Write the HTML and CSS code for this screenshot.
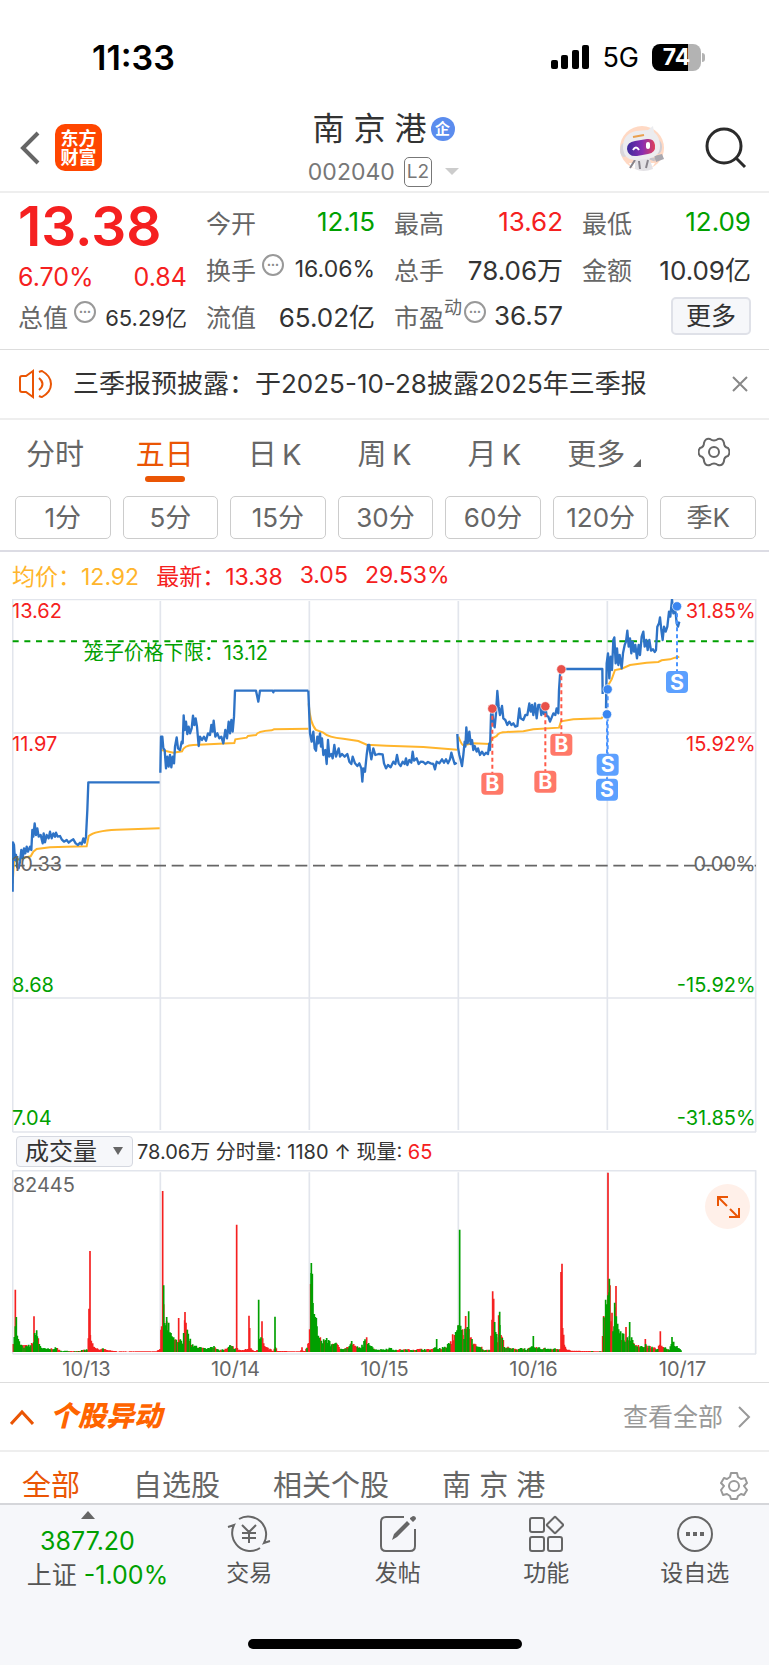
FILE: index.html
```html
<!DOCTYPE html>
<html lang="zh-CN">
<head>
  <meta charset="UTF-8">
  <meta name="viewport" content="width=device-width, initial-scale=1.0">
  <title>南京港 002040</title>
  <link rel="stylesheet" href="styles.css">
</head>
<body>
  <div class="status-bar">
    <span class="time">11:33</span>
    <div class="status-right">
      <svg width="38" height="25" viewBox="0 0 38 25">
        <rect x="0" y="15" width="7" height="9" rx="2"/>
        <rect x="10" y="10" width="7" height="14" rx="2"/>
        <rect x="21" y="5" width="7" height="19" rx="2"/>
        <rect x="31" y="0" width="7" height="24" rx="2"/>
      </svg>
      <span class="network">5G</span>
      <span class="battery">74</span>
    </div>
  </div>

  <header class="header">
    <div class="header-left">
      <button class="icon-btn" aria-label="返回">
        <svg width="20" height="34" viewBox="0 0 20 34"><path d="M18 2L3 17l15 15" fill="none" stroke="#666" stroke-width="4"/></svg>
      </button>
      <a class="logo" href="#"><span>东方</span><span>财富</span></a>
    </div>
    <div class="header-title">
      <h1>南 京 港<span class="badge">企</span></h1>
      <div class="code">002040 <span class="level">L2</span><i class="arrow-down"></i></div>
    </div>
    <div class="header-right">
      <button class="icon-btn" aria-label="助手">
        <svg width="46" height="46" viewBox="0 0 46 46">
          <defs>
            <linearGradient id="visor" x1="0" y1="0" x2="1" y2="0">
              <stop offset="0" stop-color="#3b2a9c"/>
              <stop offset=".55" stop-color="#8a2db0"/>
              <stop offset="1" stop-color="#e0405a"/>
            </linearGradient>
          </defs>
          <circle cx="23" cy="23" r="22" fill="#ffd9c4"/>
          <path d="M10 38q3 7 13 7t13-7z" fill="#fff"/>
          <path d="M16 33l14-1 4 12q-10 4-18 0z" fill="#e4e2e6"/>
          <path d="M16 35l-5 8M20 36l1 8M29 35l-2 8" stroke="#88848c" stroke-width="2"/>
          <path d="M31 33l5 2" stroke="#c5c2c8" stroke-width="3"/>
          <path d="M35 31l8-2 2 5-8 3z" fill="#a9a7ae"/>
          <ellipse cx="5" cy="25" rx="4" ry="7" fill="#d9d6da"/>
          <ellipse cx="39" cy="22" rx="4" ry="7" fill="#d0cdd3"/>
          <path d="M4 24Q3 9 17 6l12-1 5-4 1 6q6 5 6 14 0 11-13 13l-11 1Q6 36 4 24z" fill="#ececef"/>
          <path d="M14 12l11-2" stroke="#e9a04e" stroke-width="2"/>
          <path d="M8 24q0-7 8-8l12-2q7-1 8 6 1 8-7 9l-11 2Q9 32 8 24z" fill="url(#visor)"/>
          <path d="M14 25q3-5 6 0" fill="none" stroke="#fff" stroke-width="2"/>
          <rect x="27" y="17" width="4" height="7" rx="2" fill="#fff"/>
        </svg>
      </button>
      <button class="icon-btn" aria-label="搜索">
        <svg width="42" height="42" viewBox="0 0 42 42"><g fill="none" stroke="#2b2b2b" stroke-width="3"><circle cx="19" cy="19" r="17"/><path d="M31 31l9 9"/></g></svg>
      </button>
    </div>
  </header>

  <section class="quote">
    <div class="price-box">
      <div class="price">13.38</div>
      <div class="change"><span>6.70%</span><span>0.84</span></div>
    </div>
    <div class="item"><label>今开</label><b class="green">12.15</b></div>
    <div class="item"><label>最高</label><b class="red">13.62</b></div>
    <div class="item"><label>最低</label><b class="green">12.09</b></div>
    <div class="item"><label>换手<i class="dots">•••</i></label><b class="small">16.06%</b></div>
    <div class="item"><label>总手</label><b>78.06万</b></div>
    <div class="item"><label>金额</label><b>10.09亿</b></div>
    <div class="item"><label>总值<i class="dots">•••</i></label><b class="tiny">65.29亿</b></div>
    <div class="item"><label>流值</label><b>65.02亿</b></div>
    <div class="item"><label>市盈<sup>动</sup><i class="dots tight">•••</i></label><b>36.57</b></div>
    <div class="item end"><button class="more-btn">更多</button></div>
  </section>

  <section class="notice">
    <svg width="34" height="30" viewBox="0 0 34 30" fill="none" stroke="#ea5504" stroke-width="2">
      <path d="M14 2L7 7H3q-2 0-2 2v12q0 2 2 2h4l7 5zM20 9q7 6 0 12M20 3q2-1 3-1 9 5 9 13t-9 13q-1 0-3-1"/>
    </svg>
    <a href="#">三季报预披露：于2025-10-28披露2025年三季报</a>
    <button class="icon-btn" aria-label="关闭">
      <svg width="16" height="16" viewBox="0 0 16 16"><path d="M1 1l14 14M15 1L1 15" stroke="#888" stroke-width="2"/></svg>
    </button>
  </section>

  <nav class="tabs">
    <button>分时</button>
    <button class="active">五日</button>
    <button>日&thinsp;K</button>
    <button>周&thinsp;K</button>
    <button>月&thinsp;K</button>
    <button>更多<i class="corner"></i></button>
    <button aria-label="设置">
      <svg width="32" height="30" viewBox="0 0 32 30" fill="none" stroke="#666" stroke-width="2">
        <path d="M12 2q4 3 8 0 5-1 6 4 0 4 4 5 3 4 0 8-4 1-4 5-1 5-6 4-4-3-8 0-5 1-6-4 0-4-4-5-3-4 0-8 4-1 4-5 1-5 6-4z"/>
        <circle cx="16" cy="15" r="5"/>
      </svg>
    </button>
  </nav>

  <div class="periods">
    <button>1分</button>
    <button>5分</button>
    <button>15分</button>
    <button>30分</button>
    <button>60分</button>
    <button>120分</button>
    <button>季K</button>
  </div>

  <main class="charts">
    <div class="legend">
      <span class="yellow">均价：12.92</span>
      <span class="red">最新：13.38</span>
      <span class="red">3.05</span>
      <span class="red">29.53%</span>
    </div>

    <svg class="price-chart" viewBox="36 27 2235 1602">
      <g class="grid">
        <path d="M38 27V1626M481 33V1620M928 33V1620M1375 33V1620M1822 33V1620M2267 27V1626"/>
        <path d="M38 28H2268M38 429H2268M38 1224H2268M38 1626H2268"/>
      </g>
      <path class="limit-line" d="M38 154H2268"/>
      <path class="zero-line" d="M38 827H2268"/>
      <g class="avg">
        <path d="M38 880L42 815 60 806 92 799 100 785 110 777 150 772 200 770 260 769 266 738Q285 722 350 719L479 715"/>
        <path d="M484 480L520 488 546 484Q552 466 580 465L703 459 706 448 740 443 744 438 768 435Q772 424 815 421L822 418 925 416"/>
        <path d="M926 340Q930 400 948 420L970 428Q985 442 1030 446L1075 453 1100 464 1160 467 1270 471 1372 479"/>
        <path d="M1375 440Q1385 465 1390 466L1420 460 1470 462 1477 445 1490 438Q1495 426 1520 426L1570 424 1600 418 1677 413 1683 394 1720 388 1805 385 1808 380"/>
        <path d="M1822 290L1835 268 1845 240 1865 236 1890 225 1940 218 1975 216 1985 211 2010 208 2025 203 2038 200"/>
      </g>
      <g class="line" id="priceLines"></g>
      <g class="axis">
        <text class="red" x="36" y="84">13.62</text>
        <text class="red" x="36" y="484">11.97</text>
        <text class="gray" x="36" y="842">10.33</text>
        <text class="green" x="36" y="1207">8.68</text>
        <text class="green" x="36" y="1606">7.04</text>
        <text class="red right" x="2267" y="84">31.85%</text>
        <text class="red right" x="2267" y="484">15.92%</text>
        <text class="gray right" x="2267" y="842">0.00%</text>
        <text class="green right" x="2267" y="1207">-15.92%</text>
        <text class="green right" x="2267" y="1606">-31.85%</text>
        <text class="green" x="251" y="209">笼子价格下限：13.12</text>
      </g>
      <g id="trades"></g>
    </svg>

    <div class="volume-bar">
      <button class="volume-select">成交量<i></i></button>
      <p>78.06万 分时量: 1180 ↑ 现量: <span class="red">65</span></p>
    </div>

    <div class="volume-wrap">
      <svg class="volume-chart" viewBox="36 150 2235 555">
        <g class="grid">
          <path d="M38 151V702M481 157V696M928 157V696M1375 157V696M1822 157V696M2267 151V702"/>
          <path d="M38 152H2268M38 702H2268"/>
        </g>
        <path class="vol-up" id="volUp"/>
        <path class="vol-down" id="volDown"/>
        <text class="gray" x="38" y="215">82445</text>
      </svg>
      <button class="expand" aria-label="全屏">
        <svg width="24" height="24" viewBox="0 0 24 24"><path d="M2 11V2h10M2 2l9 9M23 13v9H13M22 22l-8-8" fill="none" stroke="#ea5504" stroke-width="2"/></svg>
      </button>
    </div>

    <div class="dates">
      <span>10/13</span><span>10/14</span><span>10/15</span><span>10/16</span><span>10/17</span>
    </div>
  </main>

  <section class="movement">
    <svg width="24" height="16" viewBox="0 0 24 16"><path d="M1 15L12 3l11 12" fill="none" stroke="#ea5504" stroke-width="3"/></svg>
    <h2>个股异动</h2>
    <a href="#"><span>查看全部</span>
      <svg width="14" height="22" viewBox="0 0 14 22"><path d="M2 1l10 10L2 21" fill="none" stroke="#999" stroke-width="2"/></svg>
    </a>
  </section>

  <nav class="filters">
    <button class="active">全部</button>
    <button>自选股</button>
    <button>相关个股</button>
    <button>南 京 港</button>
    <button class="setting" aria-label="设置">
      <svg width="28" height="28" viewBox="0 0 28 28" fill="none" stroke="#999" stroke-width="2">
        <path d="M11 1h6l1 4 3 2 4-1 2 5-3 3 3 4-3 5-3-1-3 2-1 3h-6l-1-3-3-2-4 1-2-5 3-4-3-3 3-5 3 1 3-2z" stroke-linejoin="round"/>
        <circle cx="14" cy="14" r="5"/>
      </svg>
    </button>
  </nav>

  <footer class="bottom">
    <div class="bottom-nav">
      <a class="index" href="#">
        <i></i>
        <span class="green">3877.20</span>
        <span class="index-name">上证 <em class="green">-1.00%</em></span>
      </a>
      <a href="#">
        <svg width="44" height="38" viewBox="0 0 44 38">
          <path d="M12 4A18 18 0 0 1 37 28l6-2M33 33A18 18 0 0 1 7 10l-6 2M15 10l7 7 7-7M22 17v11M15 18h14M15 23h14"/>
        </svg>
        交易
      </a>
      <a href="#">
        <svg width="38" height="38" viewBox="0 0 38 38">
          <path d="M25 2H7Q2 2 2 7v24q0 5 5 5h24q5 0 5-5V14"/>
          <path d="M13 25l2-6L28 6l3 3-13 13zM31 3l3-2q3 0 3 3l-3 3-3-3z" fill="#666" stroke="none"/>
        </svg>
        发帖
      </a>
      <a href="#">
        <svg width="36" height="38" viewBox="0 0 36 38">
          <rect x="2" y="3" width="14" height="14" rx="2"/><rect x="2" y="22" width="14" height="14" rx="2"/><rect x="20" y="22" width="14" height="14" rx="2"/><rect x="21" y="4" width="12" height="12" rx="1" transform="rotate(45 27 10)"/>
        </svg>
        功能
      </a>
      <a href="#">
        <svg width="38" height="38" viewBox="0 0 38 38">
          <circle cx="19" cy="19" r="17"/>
          <path d="M10 19h4M17 19h4M24 19h4" stroke-width="4"/>
        </svg>
        设自选
      </a>
    </div>
    <div class="home-bar"></div>
  </footer>

  <script src="chart.js"></script>
</body>
</html>
```
FILE: styles.css
```css
* {
  box-sizing: border-box;
}
body {
  margin: 0;
  font-family: Inter, "Noto Sans CJK SC", sans-serif;
  font-size: 25px;
  color: #333;
  background: #fff;
}
button {
  padding: 0;
  border: none;
  background: none;
  font: inherit;
  color: inherit;
  cursor: pointer;
}
a {
  color: inherit;
  text-decoration: none;
}
svg {
  display: block;
}
i, em {
  font-style: normal;
}
.red { color: #f52020; fill: #f52020; }
.green { color: #00a000; fill: #00a000; }
.gray { color: #666; fill: #666; }
.yellow { color: #ffb52c; }

.status-bar {
  display: flex;
  justify-content: space-between;
  align-items: center;
  height: 106px;
  padding: 9px 68px 0 92px;
  color: #000;
}
.time {
  font-size: 34px;
  font-weight: 600;
}
.status-right {
  display: flex;
  align-items: center;
  gap: 13px;
}
.network {
  font-size: 27px;
}
.battery {
  position: relative;
  width: 49px;
  height: 27px;
  border-radius: 8px;
  background: linear-gradient(90deg, #000 74%, #b3b3b3 74%);
  color: #fff;
  font-size: 23px;
  font-weight: 700;
  line-height: 27px;
  text-align: center;
}
.battery::after {
  content: "";
  position: absolute;
  right: -4px;
  top: 9px;
  width: 3px;
  height: 9px;
  border-radius: 0 3px 3px 0;
  background: #b3b3b3;
}

.header {
  display: grid;
  grid-template-columns: 1fr auto 1fr;
  align-items: center;
  height: 87px;
  padding: 0 22px 2px 20px;
  border-bottom: 2px solid #eee;
}
.header-left, .header-right {
  display: flex;
  align-items: center;
  gap: 15px;
}
.header-right {
  justify-content: flex-end;
  gap: 40px;
}
.logo {
  display: flex;
  flex-direction: column;
  justify-content: center;
  align-items: center;
  width: 47px;
  height: 47px;
  border-radius: 10px;
  background: #ff4600;
  color: #fff;
  font-size: 18px;
  font-weight: 700;
  line-height: 19px;
}
.header-title {
  display: flex;
  flex-direction: column;
  align-items: center;
  gap: 8px;
}
.header h1 {
  display: flex;
  align-items: center;
  gap: 4px;
  margin: 0;
  font-size: 32px;
  font-weight: 400;
  line-height: 40px;
}
.badge {
  width: 24px;
  height: 24px;
  border-radius: 50%;
  background: #5b8cee;
  color: #fff;
  font-size: 15px;
  font-weight: 700;
  line-height: 23px;
  text-align: center;
}
.code {
  display: flex;
  align-items: center;
  gap: 9px;
  color: #777;
  font-size: 23px;
  line-height: 30px;
}
.level {
  padding: 0 2px;
  border: 1px solid #777;
  border-radius: 5px;
  font-size: 19px;
  line-height: 28px;
}
.arrow-down {
  margin-left: 4px;
  border: 7px solid transparent;
  border-top-color: #ccc;
  border-bottom: 0;
}

.quote {
  display: grid;
  grid-template-columns: repeat(4, 1fr);
  grid-auto-rows: 47px;
  column-gap: 19px;
  padding: 5px 18px 10px;
  border-bottom: 1px solid #ddd;
}
.price-box {
  grid-row: span 2;
}
.price {
  color: #f52020;
  font-size: 55px;
  font-weight: 600;
  line-height: 56px;
}
.change {
  display: flex;
  justify-content: space-between;
  color: #f52020;
  line-height: 46px;
}
.item {
  display: flex;
  justify-content: space-between;
  align-items: center;
  white-space: nowrap;
}
.item label {
  display: flex;
  align-items: center;
  color: #666;
}
.item b {
  font-size: 26px;
  font-weight: 400;
}
.item .small {
  font-size: 23px;
}
.item .tiny {
  font-size: 22px;
}
.item sup {
  align-self: flex-start;
  font-size: 18px;
  line-height: 20px;
}
.dots {
  width: 22px;
  height: 22px;
  margin: 0 0 7px 6px;
  border: 2px solid #999;
  border-radius: 50%;
  color: #888;
  font-size: 7px;
  line-height: 18px;
  text-align: center;
}
.dots.tight {
  margin-left: 2px;
}
.item.end {
  justify-content: flex-end;
}
.more-btn {
  width: 80px;
  height: 38px;
  border: 2px solid #dfe1e8;
  border-radius: 5px;
  background: #f6f7fa;
  line-height: 30px;
}

.notice {
  display: flex;
  align-items: center;
  height: 70px;
  padding: 0 21px 0 19px;
  border-bottom: 2px solid #eee;
  font-size: 26px;
}
.notice a {
  flex: 1;
  margin-left: 20px;
  padding-bottom: 5px;
  white-space: nowrap;
}

.tabs {
  display: grid;
  grid-template-columns: repeat(7, 1fr);
  height: 76px;
  color: #666;
  font-size: 29px;
}
.tabs button {
  position: relative;
  display: flex;
  justify-content: center;
  align-items: center;
  height: 66px;
  padding-bottom: 3px;
}
.tabs .active {
  color: #ea5504;
}
.tabs .active::after {
  content: "";
  position: absolute;
  bottom: 4px;
  left: 50%;
  width: 40px;
  height: 6px;
  margin-left: -20px;
  border-radius: 3px;
  background: #ea5504;
}
.corner {
  align-self: flex-end;
  margin: 0 0 16px 8px;
  border-left: 8px solid transparent;
  border-bottom: 8px solid #666;
}
.periods {
  display: grid;
  grid-template-columns: repeat(7, 1fr);
  gap: 12px;
  padding: 0 13px 11px 15px;
  border-bottom: 2px solid #dcdce4;
  color: #666;
  font-size: 26px;
}
.periods button {
  height: 43px;
  border: 1px solid #ccc;
  border-radius: 5px;
  line-height: 41px;
}

.charts {
  padding: 0 12px;
}
.legend {
  display: flex;
  align-items: center;
  gap: 17px;
  height: 47px;
  padding-bottom: 2px;
  font-size: 23px;
}
.price-chart, .volume-chart {
  width: 100%;
  height: auto;
}
.price-chart text, .volume-chart text {
  font-size: 60px;
}
.right {
  text-anchor: end;
}
.grid path {
  fill: none;
  stroke: #e2e5ec;
  stroke-width: 5;
}
.limit-line {
  stroke: #00a000;
  stroke-width: 6;
  stroke-dasharray: 18 17;
}
.zero-line {
  stroke: #666;
  stroke-width: 5;
  stroke-dasharray: 36 17;
}
.avg path {
  fill: none;
  stroke: #ffb52c;
  stroke-width: 6;
}
.line path {
  fill: none;
  stroke: #2e73c6;
  stroke-width: 7;
  stroke-linejoin: round;
}
.buy { fill: #ff7868; }
.sell { fill: #5ca0ff; }
.buy-dot { fill: #e8504a; stroke: #fff; stroke-width: 2; }
.sell-dot { fill: #3a86f0; stroke: #fff; stroke-width: 2; }
.buy-link, .sell-link {
  stroke: #ff5a48;
  stroke-width: 6;
  stroke-dasharray: 12 9;
}
.sell-link {
  stroke: #4a94ff;
}
.price-chart .mark {
  fill: #fff;
  font-size: 64px;
  font-weight: 700;
  text-anchor: middle;
}
.volume-bar {
  display: flex;
  align-items: center;
  height: 37px;
  padding: 0 0 1px 4px;
  font-size: 20px;
}
.volume-bar p {
  margin: 0 0 1px 4px;
  white-space: nowrap;
}
.volume-select {
  display: flex;
  align-items: center;
  justify-content: space-between;
  width: 117px;
  height: 31px;
  padding: 0 9px 0 8px;
  border: 1px solid #d5d8e0;
  border-radius: 4px;
  background: #f6f7fa;
  font-size: 24px;
  line-height: 27px;
}
.volume-select i {
  border: 5px solid transparent;
  border-top: 8px solid #666;
  border-bottom: 0;
}
.volume-wrap {
  position: relative;
}
.vol-up, .vol-down {
  fill: none;
  stroke: #f52020;
  stroke-width: 5;
}
.vol-down {
  stroke: #00a000;
}
.expand {
  position: absolute;
  top: 14px;
  right: 7px;
  display: flex;
  justify-content: center;
  align-items: center;
  width: 45px;
  height: 45px;
  border-radius: 50%;
  background: #fff0e9;
}
.dates {
  display: grid;
  grid-template-columns: repeat(5, 1fr);
  height: 27px;
  color: #666;
  font-size: 20px;
  line-height: 29px;
  text-align: center;
}

.movement {
  display: flex;
  align-items: center;
  height: 70px;
  padding: 0 18px 0 10px;
  border-top: 1px solid #ddd;
  border-bottom: 2px solid #eee;
}
.movement h2 {
  margin: 0 0 0 16px;
  padding-bottom: 5px;
  color: #ff6400;
  font-size: 28px;
  font-style: italic;
  font-weight: 900;
}
.movement a {
  display: flex;
  align-items: center;
  gap: 14px;
  margin-left: auto;
  color: #999;
}
.movement a span {
  padding-bottom: 4px;
}
.filters {
  display: flex;
  align-items: center;
  gap: 53px;
  height: 51px;
  padding: 17px 21px 0 22px;
  color: #666;
  font-size: 29px;
  line-height: 34px;
  white-space: nowrap;
}
.filters .active {
  color: #ea5504;
}
.filters .setting {
  margin-left: auto;
}

.bottom {
  height: 162px;
  border-top: 2px solid #d5d6da;
  background: #f6f7fa;
}
.bottom-nav {
  display: flex;
  height: 134px;
  color: #555;
}
.bottom-nav a {
  flex: 1;
  display: flex;
  flex-direction: column;
  align-items: center;
  gap: 5px;
  padding-top: 10px;
  font-size: 23px;
  line-height: 30px;
}
.bottom-nav svg {
  fill: none;
  stroke: #666;
  stroke-width: 2;
}
.bottom-nav .index {
  flex: 0 0 175px;
  gap: 0;
  padding-top: 6px;
  font-size: 25px;
  line-height: 34px;
}
.index i {
  margin-bottom: 5px;
  border: 7px solid transparent;
  border-top: 0;
  border-bottom: 8px solid #666;
}
.index-name {
  padding-left: 20px;
  white-space: nowrap;
}
.home-bar {
  width: 274px;
  height: 10px;
  margin: 0 auto;
  border-radius: 5px;
  background: #000;
}
```
FILE: chart.js
```js
// price lines, one per trading session
const prices = [
  '38,905 39,757 42,765 45,810 48,795 52,832 56,835 60,815 64,780 68,805 72,775 76,790 80,770 84,785 90,770 94,780 97,720 100,740 104,700 108,735 112,715 116,740 122,735 128,760 131,730 135,757 140,735 146,745 150,725 155,745 160,730 165,740 168,728 173,740 180,738 185,748 192,755 200,750 206,758 213,752 220,748 227,760 234,765 240,758 245,763 250,745 254,758 258,740 262,660 265,577 479,577',
  '481,548 483,440 487,440 490,475 494,480 498,535 502,500 506,530 510,495 514,532 518,500 522,520 525,470 530,442 534,475 540,480 545,455 548,460 551,376 554,420 558,395 562,432 566,410 570,430 575,415 579,377 583,405 587,385 591,410 596,468 600,440 606,450 612,440 618,452 624,430 630,435 634,405 638,425 641,392 646,440 652,430 658,445 664,440 670,460 676,420 681,445 686,395 690,430 694,390 698,425 702,380 705,302 768,302 775,335 780,302 818,302 820,307 822,302 925,302',
  '925,302 930,430 935,455 940,425 944,475 948,482 952,440 955,460 960,430 963,470 966,445 970,495 976,480 980,522 984,450 988,500 994,492 998,505 1003,465 1008,500 1016,475 1020,500 1026,492 1034,500 1042,492 1048,515 1054,522 1058,500 1065,520 1072,528 1078,520 1084,535 1087,575 1090,535 1095,545 1100,495 1104,465 1108,465 1110,485 1114,508 1120,475 1126,495 1136,492 1148,493 1152,520 1158,535 1164,525 1172,532 1180,515 1186,522 1191,495 1196,520 1202,528 1208,515 1214,522 1218,505 1222,525 1228,510 1234,518 1238,485 1242,512 1250,505 1256,522 1262,515 1270,516 1276,522 1284,516 1292,520 1300,522 1305,538 1310,515 1318,520 1326,508 1332,518 1338,508 1344,520 1350,508 1354,488 1358,502 1364,522 1370,518',
  '1372,432 1374,472 1378,495 1382,510 1386,528 1390,495 1394,455 1396,470 1399,412 1403,460 1408,425 1412,462 1416,450 1420,480 1424,468 1430,485 1434,475 1440,495 1446,485 1452,495 1458,488 1464,492 1468,460 1470,480 1473,375 1476,350 1480,400 1484,412 1488,370 1492,303 1496,350 1500,375 1506,348 1510,385 1516,390 1522,405 1528,395 1534,405 1540,400 1546,410 1552,408 1558,355 1562,385 1570,390 1576,375 1582,375 1588,340 1592,365 1596,345 1600,375 1605,340 1610,385 1615,345 1620,345 1624,375 1628,350 1632,372 1636,350 1640,378 1645,380 1650,395 1654,385 1660,370 1666,375 1670,355 1675,370 1677,300 1680,255 1684,237 1807,237 1808,312',
  '1818,355 1820,220 1824,190 1828,265 1832,200 1836,240 1840,150 1843,142 1847,220 1851,175 1855,225 1859,195 1865,235 1869,190 1874,165 1878,155 1882,122 1886,170 1890,145 1894,190 1898,155 1902,185 1906,165 1911,205 1916,165 1920,195 1925,140 1930,125 1934,170 1939,150 1943,180 1948,150 1953,182 1959,178 1964,186 1968,180 1972,110 1977,100 1980,82 1984,120 1988,150 1992,110 1997,125 2002,110 2007,65 2011,80 2016,28 2020,70 2026,60 2030,100 2034,110 2038,95'
];

// type, x, dot y, label x, label y
const trades = [
  ['B', 1477, 356, 1477, 581],
  ['B', 1636, 349, 1636, 575],
  ['B', 1684, 238, 1684, 464],
  ['S', 1823, 298, 1823, 524],
  ['S', 1821, 373, 1821, 599],
  ['S', 2031, 49, 2031, 276]
];

// volume outline: x, height, share of falling bars
const volume = [
  [40, 40, .6], [46, 80, .6], [52, 50, .8], [58, 32, .8], [66, 20, .6], [80, 20, .5], [98, 26, .5], [104, 65, .6],
  [112, 60, .6], [118, 28, .6], [126, 12, .7], [145, 10, .5], [172, 14, .5], [180, 4, .6], [230, 3, .5], [262, 8, 0],
  [268, 70, 0], [275, 30, 0], [283, 14, 0], [300, 8, .2], [315, 13, 0], [322, 5, 0], [345, 4, 0], [350, 2, 0],
  [470, 2, .1], [480, 10, 0], [485, 100, 0], [491, 190, .7], [497, 100, .7], [503, 95, .7], [510, 65, .7], [518, 42, .7],
  [526, 40, .3], [533, 42, .4], [541, 38, .5], [548, 25, .5], [555, 100, .3], [562, 65, .6], [568, 50, .8], [575, 20, .8],
  [586, 24, .7], [600, 16, .8], [620, 10, .7], [636, 22, .3], [655, 6, .6], [680, 10, .6], [690, 20, .5], [702, 16, .3],
  [712, 12, 0], [725, 5, 0], [750, 12, 0], [765, 3, .2], [774, 10, .4], [780, 60, .5], [788, 42, 0], [795, 15, 0],
  [810, 10, 0], [820, 3, .2], [826, 20, .5], [832, 3, 0], [900, 2, 0], [906, 8, 0], [915, 4, .2], [926, 30, .4],
  [933, 220, .6], [940, 120, .8], [948, 100, .9], [955, 50, .8], [965, 36, .9], [980, 45, .9], [992, 25, .6], [1005, 32, .6],
  [1020, 12, .6], [1045, 16, .6], [1055, 32, .7], [1066, 18, .5], [1080, 14, .7], [1100, 42, .9], [1112, 28, .8], [1122, 10, .7],
  [1150, 8, .8], [1168, 14, .7], [1185, 6, .5], [1200, 8, .6], [1240, 8, .3], [1265, 10, .5], [1290, 8, .5], [1310, 15, .7],
  [1322, 12, .6], [1340, 20, .6], [1358, 36, .5], [1368, 60, .5], [1376, 100, .6], [1382, 120, .7], [1389, 55, .7], [1396, 70, .6],
  [1404, 70, .4], [1410, 65, .5], [1418, 35, .6], [1430, 18, .8], [1445, 15, .7], [1455, 5, .6], [1470, 10, 0], [1478, 140, .1],
  [1484, 80, .9], [1492, 40, .8], [1500, 80, .5], [1507, 45, .6], [1515, 18, .7], [1530, 12, .8], [1550, 10, .6], [1565, 14, .4],
  [1580, 8, .8], [1600, 18, .7], [1620, 12, .5], [1640, 12, .8], [1665, 12, .4], [1680, 8, .1], [1685, 100, 0], [1693, 30, 0],
  [1698, 10, 0], [1715, 4, 0], [1770, 3, .2], [1805, 2, 0], [1811, 100, .6], [1818, 150, .8], [1827, 200, .8], [1833, 130, .7],
  [1839, 90, .8], [1846, 150, .8], [1853, 95, .8], [1862, 65, .9], [1872, 50, .8], [1882, 50, .5], [1892, 48, .6], [1902, 25, .8],
  [1912, 25, .8], [1925, 18, .5], [1938, 22, .5], [1950, 18, .7], [1970, 10, .8], [1982, 25, .1], [1990, 14, .8], [2008, 10, .8],
  [2018, 35, .8], [2028, 20, .8], [2040, 14, .8], [2046, 3, 0]
];

// single peaks
const peaks = {
  up: [[46, 187], [102, 107], [267, 130], [270, 303], [488, 483], [536, 102], [555, 120], [710, 382], [747, 109], [749, 72],
    [786, 92], [906, 14], [1397, 108], [1478, 182], [1481, 160], [1496, 110], [1683, 240], [1686, 265], [1811, 108], [1824, 538],
    [1830, 200], [1848, 198], [1878, 75], [1936, 39], [1981, 62], [1358, 53]],
  down: [[49, 105], [491, 200], [500, 105], [776, 157], [825, 106], [934, 267], [937, 235], [949, 102], [1310, 39], [1379, 367],
    [1406, 122], [1499, 121], [1484, 90], [1600, 48], [1817, 157], [1828, 220], [1844, 148], [1889, 90], [2016, 45]]
};

const BASE = 696;
let seed = 7;
function rand() {
  seed = (seed * 16807) % 2147483647;
  return seed / 2147483647;
}

function bar(x, h) {
  return 'M' + x + ' ' + BASE + 'V' + Math.round(BASE - h);
}

function drawPrices() {
  document.getElementById('priceLines').innerHTML = prices.map(p => `<path d="M${p}"/>`).join('');
}

function drawTrades() {
  let links = '';
  let marks = '';
  trades.forEach(([type, x, y, lx, ly]) => {
    const cls = type === 'B' ? 'buy' : 'sell';
    links += `<path class="${cls}-link" d="M${x} ${y}V${ly - 30}"/>`;
    marks += `<circle class="${cls}-dot" cx="${x}" cy="${y}" r="14"/>
      <rect class="${cls}" x="${lx - 33}" y="${ly - 33}" width="66" height="66" rx="12"/>
      <text class="mark" x="${lx}" y="${ly + 23}">${type}</text>`;
  });
  document.getElementById('trades').innerHTML = links + marks;
}

function drawVolume() {
  let up = '';
  let down = '';
  for (let i = 0; i < volume.length - 1; i++) {
    const [x1, h1, share] = volume[i];
    const [x2, h2] = volume[i + 1];
    for (let x = x1; x < x2; x += 3) {
      const h = (h1 + (h2 - h1) * (x - x1) / (x2 - x1)) * (0.6 + rand() * 0.5);
      if (rand() < share) down += bar(x, h);
      else up += bar(x, h);
    }
  }
  peaks.up.forEach(([x, h]) => up += bar(x, h));
  peaks.down.forEach(([x, h]) => down += bar(x, h));
  document.getElementById('volUp').setAttribute('d', up);
  document.getElementById('volDown').setAttribute('d', down);
}

drawPrices();
drawTrades();
drawVolume();
```
